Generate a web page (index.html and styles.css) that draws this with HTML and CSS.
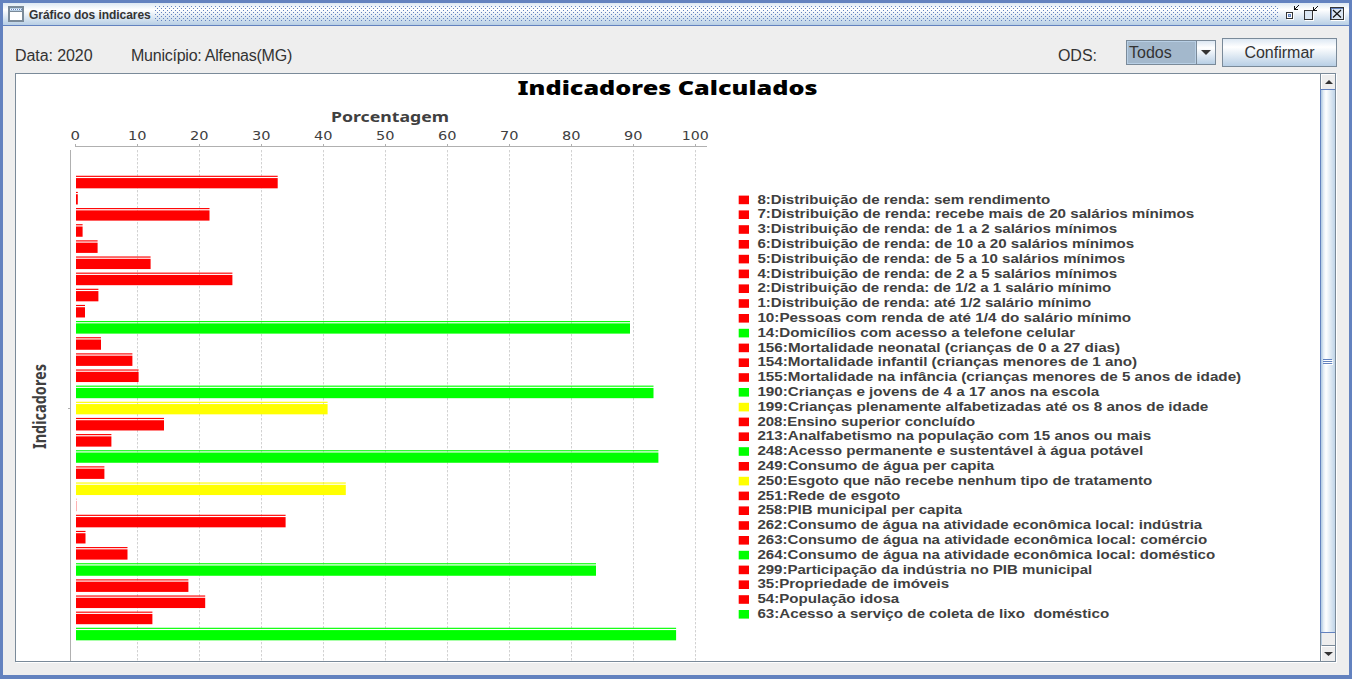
FILE: index.html
```html
<!DOCTYPE html>
<html lang="pt-BR">
<head>
<meta charset="utf-8">
<title>Gráfico dos indicares</title>
<link rel="stylesheet" href="styles.css">
</head>
<body>
<div class="window">
  <header class="titlebar">
    <svg class="app-icon" width="16" height="16" shape-rendering="crispEdges"><rect x="1" y="1" width="14" height="14" fill="#fff" stroke="#7a8a99" stroke-width="2"/><path d="M2 2.5H14M2 4.5H14" stroke="#b8cfe5"/><path d="M3 3.5H14" stroke="#6382bf" stroke-dasharray="1 1"/><path d="M2 5.5H14" stroke="#7a8a99"/></svg>
    <span class="title">Gráfico dos indicares</span>
    <span class="bumps"></span>
    <svg class="controls" width="64" height="16" shape-rendering="crispEdges">
      <path d="M3.5 7.5H9.5V13.5H3.5Z" fill="none" stroke="#fff"/><path d="M2.5 6.5H8.5V12.5H2.5Z" fill="#fff" stroke="#333"/><path d="M4.5 8.5H6.5V10.5H4.5Z" fill="#b8cfe5" stroke="#6382bf"/><path d="M10.500 0V3.500H14M11 3L14.500 -.5" fill="none" stroke="#111"/>
      <path d="M21.500 5.500H29.500V14.500H21.500Z" fill="none" stroke="#fff"/><path d="M20.500 4.500H28.500V13.500H20.500Z" fill="#dbe6f2" stroke="#333"/><path d="M29.500 1V4.500H33M30 4L33.500 .5" fill="none" stroke="#111"/>
      <rect x="47.500" y="1.500" width="13" height="13" fill="#fff" stroke="#fff"/><rect x="46.500" y="1.500" width="13" height="12" fill="#dbe6f2" stroke="#333"/><path d="M47.500 13V2.500H59" fill="none" stroke="#6382bf"/><path d="M49 4L57 11.500M57 4L49 11.500" stroke="#111" stroke-width="1.200" shape-rendering="auto"/>
    </svg>
  </header>
  <div class="toolbar">
    <span class="date">Data: 2020</span>
    <span class="city">Município: Alfenas(MG)</span>
    <span class="ods">ODS:</span>
    <div class="select"><span class="value">Todos</span><span class="arrow"><svg width="10" height="5"><path d="M0 0H10L5 5Z" fill="#333"/></svg></span></div>
    <button class="confirm">Confirmar</button>
  </div>
  <main class="viewport">
    <svg class="chart" id="chart" viewBox="16 74 1304 587" width="1304" height="587"></svg>
    <div class="scrollbar">
      <span class="step up"><svg width="8" height="4"><path d="M0 4H8L4 0Z" fill="#333"/></svg></span>
      <span class="thumb"><svg width="10" height="6" shape-rendering="crispEdges"><path d="M1 1.500H10M1 3.500H10M1 5.500H10" stroke="#fff"/><path d="M0 .5H9M0 2.500H9M0 4.500H9" stroke="#6382bf"/></svg></span>
      <span class="track"></span>
      <span class="step down"><svg width="9" height="4"><path d="M0 0H9L4.500 4Z" fill="#333"/></svg></span>
    </div>
  </main>
</div>
<script src="chart.js"></script>
</body>
</html>
```
FILE: styles.css
```css
* { box-sizing: border-box; }
body { margin: 0; overflow: hidden; font-family: "Liberation Sans", Arial, sans-serif; color: #333; }
.window { width: 1352px; height: 679px; padding: 3px 3px 4px; background: #6382bf; display: flex; flex-direction: column; }
.titlebar { height: 23px; flex: none; display: flex; align-items: flex-start; padding: 3px 1px 0 5px; border-bottom: 1px solid #6382bf; background: linear-gradient(#dde8f3 0, #fff 30%, #b8cfe5 100%); }
.app-icon { flex: none; }
.title { margin-left: 5px; width: 122px; font-weight: bold; font-size: 12px; line-height: 18px; letter-spacing: -0.05px; white-space: nowrap; }
.bumps { flex: 1; height: 16px; margin: 0 6px 0 4px; background-image: radial-gradient(circle at .5px .5px, #6382bf .6px, transparent .7px), radial-gradient(circle at 2.5px 2.5px, #6382bf .6px, transparent .7px); background-size: 4px 4px; }
.controls { flex: none; overflow: visible; }
.toolbar { height: 47px; flex: none; display: flex; align-items: flex-start; padding: 12px 12px 0; background: #eee; font-size: 16px; line-height: 18px; white-space: nowrap; }
.date, .city, .ods { padding-top: 9px; }
.date { width: 78px; letter-spacing: -0.08px; }
.city { margin-left: 38px; letter-spacing: -0.24px; }
.ods { margin-left: auto; }
.select { width: 90px; height: 25px; margin: 2px 6px 0 29px; display: flex; border: 1px solid #7a8a99; background: #a3b8cc; }
.value { width: 69px; padding: 2px 0 0 1px; border: 1px solid #b8cfe5; line-height: 18px; }
.arrow { flex: 1; display: grid; place-items: center; border-left: 1px solid #7a8a99; background: linear-gradient(#dde8f3, #fff 30%, #b8cfe5); }
.confirm { width: 115px; height: 29px; padding: 0; border: 1px solid #7a8a99; background: linear-gradient(#dde8f3, #fff 30%, #b8cfe5); font: inherit; color: inherit; }
.viewport { flex: 1; display: flex; margin: 0 13px 13px 12px; border: 1px solid #7a8a99; background: #fff; box-shadow: 1px 1px #fff, 0 0 0 13px #eee; clip-path: inset(0 -13px -13px -12px); }
.chart { flex: none; display: block; }
.scrollbar { width: 15px; display: flex; flex-direction: column; border-left: 1px solid #7a8a99; background: #eee; }
.step { height: 15px; flex: none; display: grid; place-items: center; border: 1px solid #fff; border-width: 1px 0 0 1px; }
.thumb { height: 544px; flex: none; display: grid; place-items: center; margin-left: -1px; padding-top: 2px; border: 1px solid #6382bf; border-right: 0; background: linear-gradient(90deg, #b8cfe5 0 1px, #dde8f3 2px, #fff 5px, #b8cfe5 15px); }
.track { flex: 1; border-left: 1px solid #b8cfe5; }
.down { border-top: 1px solid #7a8a99; box-shadow: inset 0 1px #fff; height: 16px; }
.chart-title { font: 900 20px "Noto Sans", sans-serif; fill: #000; }
.axis-title { font: bold 14px "Noto Sans", sans-serif; fill: #404040; }
.axis-title.tall { font-size: 18px; }
.tick-label { font: 12px "DejaVu Sans", sans-serif; fill: #404040; }
.legend-label { font: bold 12px "Liberation Sans", Arial, sans-serif; fill: #404040; white-space: pre; }
.axis { stroke: #b0b0b0; shape-rendering: crispEdges; }
.grid { stroke: #d2d2d2; stroke-dasharray: 2.4 1.6; }
.red { fill: #f00; }
.green { fill: #0f0; }
.yellow { fill: #ff0; }
```
FILE: chart.js
```js
// Each entry: label, colour class, x of the bar's end, x of the label's end.
const rows = [
  ["8:Distribuição de renda: sem rendimento", "red", 277.7, 1050],
  ["7:Distribuição de renda: recebe mais de 20 salários mínimos", "red", 77.8, 1194],
  ["3:Distribuição de renda: de 1 a 2 salários mínimos", "red", 209.5, 1117],
  ["6:Distribuição de renda: de 10 a 20 salários mínimos", "red", 82.6, 1134],
  ["5:Distribuição de renda: de 5 a 10 salários mínimos", "red", 97.6, 1125],
  ["4:Distribuição de renda: de 2 a 5 salários mínimos", "red", 150.6, 1117],
  ["2:Distribuição de renda: de 1/2 a 1 salário mínimo", "red", 232.4, 1111],
  ["1:Distribuição de renda: até 1/2 salário mínimo", "red", 98.4, 1091],
  ["10:Pessoas com renda de até 1/4 do salário mínimo", "red", 85, 1131],
  ["14:Domicílios com acesso a telefone celular", "green", 630, 1075],
  ["156:Mortalidade neonatal (crianças de 0 a 27 dias)", "red", 101, 1120],
  ["154:Mortalidade infantil (crianças menores de 1 ano)", "red", 132.4, 1137],
  ["155:Mortalidade na infância (crianças menores de 5 anos de idade)", "red", 138.6, 1241],
  ["190:Crianças e jovens de 4 a 17 anos na escola", "green", 653.5, 1099],
  ["199:Crianças plenamente alfabetizadas até os 8 anos de idade", "yellow", 327.6, 1208],
  ["208:Ensino superior concluído", "red", 164, 975],
  ["213:Analfabetismo na população com 15 anos ou mais", "red", 111.4, 1151],
  ["248:Acesso permanente e sustentável à água potável", "green", 658.4, 1143],
  ["249:Consumo de água per capita", "red", 104.4, 994],
  ["250:Esgoto que não recebe nenhum tipo de tratamento", "yellow", 345.8, 1152],
  ["251:Rede de esgoto", "red", 76.3, 900],
  ["258:PIB municipal per capita", "red", 285.6, 962],
  ["262:Consumo de água na atividade econômica local: indústria", "red", 85.5, 1202],
  ["263:Consumo de água na atividade econômica local: comércio", "red", 127.5, 1207],
  ["264:Consumo de água na atividade econômica local: doméstico", "green", 596, 1215],
  ["299:Participação da indústria no PIB municipal", "red", 188.4, 1092],
  ["35:Propriedade de imóveis", "red", 205.2, 949],
  ["54:População idosa", "red", 152.4, 899],
  ["63:Acesso a serviço de coleta de lixo  doméstico", "green", 676.1, 1109]
];
let s = "";
const fitted = (cls, x, y, w, t) => `<text class="${cls}" x="${x}" y="${y}" textLength="${w}" lengthAdjust="spacingAndGlyphs">${t}</text>`;
s += fitted("chart-title", 517.5, 95, 300, "Indicadores Calculados");
s += fitted("axis-title", 331, 122, 118, "Porcentagem");
s += `<g transform="translate(45.500 449) rotate(-90)">${fitted("axis-title tall", 0, 0, 85, "Indicadores")}</g>`;
for (let i = 0; i <= 10; i++) {
  const x = 75.5 + 62 * i, w = i === 0 ? 9.5 : i === 10 ? 27 : 18.5;
  s += fitted("tick-label", x - w / 2 - 0.3, 140, w, i * 10);
  s += `<path class="axis" d="M${x} 144V147"/>`;
  if (i) s += `<path class="grid" d="M${x} 150V661"/>`;
}
s += `<path class="axis" d="M75 146.5H707M70.5 150V661M68 408.5H71"/>`;
rows.forEach(([label, colour, barEnd, end], i) => {
  const y = 175.75 + 16.143 * i, ly = 195.6 + 14.8 * i, w = barEnd - 76;
  s += `<g class="${colour}"><rect x="76" y="${y}" width="${w}" height="1.15"/><rect x="76" y="${y + 2.33}" width="${w}" height="10.25"/><rect x="738.7" y="${ly}" width="10.3" height="8.6"/></g>`;
  s += fitted("legend-label", 757.4, Math.round(ly + 8), end - 757.2, label);
});
document.getElementById("chart").innerHTML = s;
```
